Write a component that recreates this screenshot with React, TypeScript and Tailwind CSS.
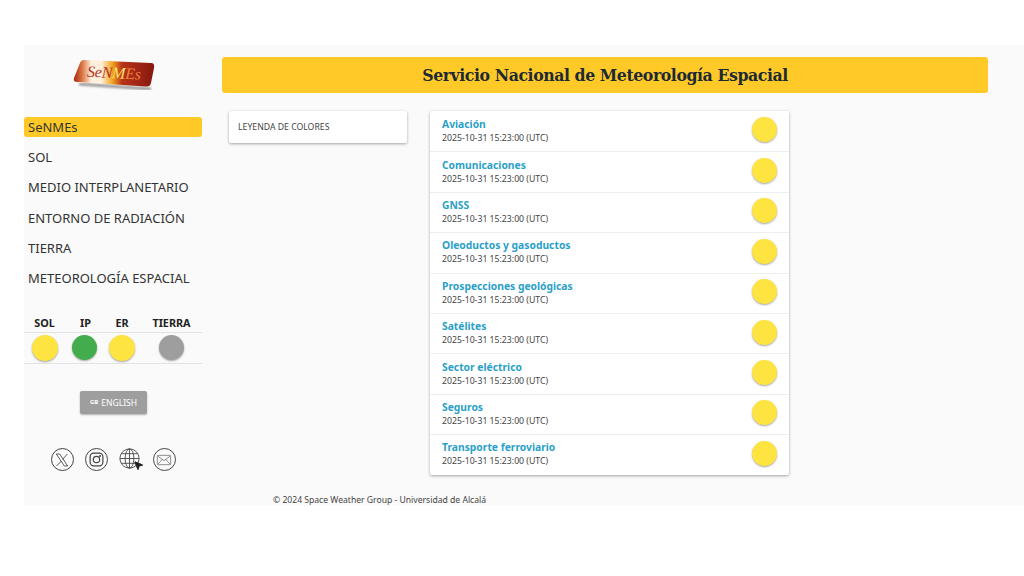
import React from 'react';
import { MousePointer2 } from 'lucide-react';

const navItems = ['SeNMEs', 'SOL', 'MEDIO INTERPLANETARIO', 'ENTORNO DE RADIACIÓN', 'TIERRA', 'METEOROLOGÍA ESPACIAL'];

const sectors = [
  'Aviación',
  'Comunicaciones',
  'GNSS',
  'Oleoductos y gasoductos',
  'Prospecciones geológicas',
  'Satélites',
  'Sector eléctrico',
  'Seguros',
  'Transporte ferroviario',
];

function Logo() {
  return (
    <svg width="84" height="34" viewBox="0 0 84 34" className="block">
      <defs>
        <linearGradient id="logoFill" x1="0" y1="0" x2="1" y2="0">
          <stop offset="0" stopColor="#a62a18" />
          <stop offset="0.1" stopColor="#d9733f" />
          <stop offset="0.22" stopColor="#fff0dc" />
          <stop offset="0.34" stopColor="#fff0dc" />
          <stop offset="0.48" stopColor="#f2a21e" />
          <stop offset="0.6" stopColor="#b8321a" />
          <stop offset="1" stopColor="#87180f" />
        </linearGradient>
        <filter id="logoBlur">
          <feGaussianBlur stdDeviation="1.2" />
        </filter>
      </defs>
      <path d="M6 26 L78 31" stroke="#999" strokeWidth="3" fill="none" filter="url(#logoBlur)" />
      <path d="M11 2 L78 5 Q82 5 81 10 L78 25 Q77 29 73 28.500 L4 24 Q0 24 1 20 L7 5 Q8 2 11 2 Z" fill="url(#logoFill)" />
      <text x="14" y="20" fontFamily="'Liberation Serif', serif" fontStyle="italic" fontSize="16" textLength="54" transform="rotate(3 40 15)">
        <tspan fill="#b3322a">SeN</tspan>
        <tspan fill="#ffe36a">M</tspan>
        <tspan fill="#e8853a">Es</tspan>
      </text>
    </svg>
  );
}

function Dot({ color, size = 'h-[26px] w-[26px]' }: { color: string; size?: string }) {
  return <span className={`block rounded-full ${size} ${color} shadow-[0_1px_2px_rgba(0,0,0,0.35)]`} />;
}

function CircleIcon({ children }: { children: React.ReactNode }) {
  return (
    <span className="flex h-[23px] w-[23px] items-center justify-center rounded-full border border-[#444] text-[#444]">
      {children}
    </span>
  );
}

function Sidebar() {
  return (
    <aside className="w-[178px] shrink-0">
      <div className="flex justify-center pt-[13px] pl-[4px]">
        <Logo />
      </div>
      <nav className="mt-[25px] flex flex-col gap-[10.2px]">
        {navItems.map((item, i) => (
          <div
            key={item}
            className={`h-[20px] rounded-[3px] pl-[4px] text-[13px] leading-[20px] whitespace-nowrap text-[#333] ${i === 0 ? 'bg-[#ffca28]' : ''}`}
          >
            {item}
          </div>
        ))}
      </nav>

      <div className="mt-[27.500px] border-b border-[#e2e2e2] pb-[2px] text-center">
        <div className="grid grid-cols-[41px_38px_38px_61px] border-b border-[#e2e2e2] pb-[2px] text-[10.8px] leading-[15px] font-bold text-[#222]">
          <span>SOL</span>
          <span className="pl-[3px]">IP</span>
          <span>ER</span>
          <span>TIERRA</span>
        </div>
        <div className="grid grid-cols-[41px_38px_38px_61px] justify-items-center pt-[2px]">
          <Dot color="bg-[#fee440]" />
          <Dot color="bg-[#43ac4c]" size="h-[25px] w-[25px]" />
          <Dot color="bg-[#fee440]" />
          <Dot color="bg-[#9e9e9e]" size="h-[25px] w-[25px]" />
        </div>
      </div>

      <div className="mt-[27px] flex justify-center pl-[1px]">
        <button className="flex h-[23px] w-[67px] items-center justify-center gap-[3px] rounded-[2px] bg-[#9e9e9e] text-[8.5px] text-white shadow-[0_1px_2px_rgba(0,0,0,0.3)]">
          <span className="text-[6px] font-bold">GB</span>ENGLISH
        </button>
      </div>

      <div className="mt-[34px] flex items-center justify-center gap-[11px]">
        <CircleIcon>
          <svg viewBox="0 0 24 24" width="16" height="16" fill="none" stroke="currentColor" strokeWidth="1.3">
            <path d="M3.500 3h5l12 18h-5z" />
            <path d="M20 3l-7 8M11 13.500 4 21" />
          </svg>
        </CircleIcon>
        <CircleIcon>
          <svg viewBox="0 0 24 24" width="17" height="17" fill="none" stroke="currentColor" strokeWidth="1.7">
            <rect x="3" y="3" width="18" height="18" rx="5" />
            <circle cx="12" cy="12" r="4.500" />
            <circle cx="17" cy="7" r="0.600" />
          </svg>
        </CircleIcon>
        <span className="relative h-[23px] w-[23px]">
          <svg viewBox="0 0 24 24" width="21" height="21" fill="none" stroke="#444" strokeWidth="1">
            <circle cx="12" cy="12" r="11" />
            <ellipse cx="12" cy="12" rx="5" ry="11" />
            <path d="M12 1v22M1 12h22M2.500 6.500h19M2.500 17.500h19" />
          </svg>
          <MousePointer2 size={11} className="absolute right-[-2px] bottom-[0px] fill-[#222] text-[#222]" />
        </span>
        <CircleIcon>
          <svg viewBox="0 0 24 24" width="16" height="16" fill="none" stroke="currentColor" strokeWidth="0.9">
            <rect x="2" y="5" width="20" height="14" rx="1.500" />
            <path d="M2.500 6l9.500 7 9.500-7M2.500 18.500l7-7.500M21.500 18.500l-7-7.500" />
          </svg>
        </CircleIcon>
      </div>
    </aside>
  );
}

export default function App() {
  return (
    <div className="min-h-screen bg-white pt-[45px] font-['Noto_Sans','Open_Sans',sans-serif]">
      <div className="relative ml-[24px] flex h-[461px] bg-[#fafafa]">
        <Sidebar />
        <main className="ml-[20px] flex-1 pt-[12px]">
          <header className="flex h-[36px] w-[766px] items-center justify-center rounded-[3px] bg-[#ffca28]">
            <h1 className="font-['DejaVu_Serif',serif] text-[17.5px] font-bold tracking-[-0.43px] whitespace-nowrap text-[#1d2a33] [font-stretch:condensed]">
              Servicio Nacional de Meteorología Espacial
            </h1>
          </header>

          <div className="mt-[18px] ml-[7px] flex items-start gap-[23px]">
            <div className="flex h-[32px] w-[178px] items-center rounded-[2px] bg-white pt-[1px] pl-[9px] text-[8.7px] text-[#444] shadow-[0_1px_3px_rgba(0,0,0,0.35)]">
              LEYENDA DE COLORES
            </div>

            <ul className="w-[359px] rounded-[2px] bg-white shadow-[0_1px_3px_rgba(0,0,0,0.35)]">
              {sectors.map((name, i) => (
                <li
                  key={name}
                  className={`flex h-[40.4px] items-center justify-between px-[12px] ${i > 0 ? 'border-t border-[#eeeeee]' : ''}`}
                >
                  <div>
                    <div className="text-[10.3px] leading-[13px] font-bold text-[#2a9fc9]">{name}</div>
                    <div className="text-[8.7px] leading-[14px] text-[#444]">2025-10-31 15:23:00 (UTC)</div>
                  </div>
                  <span className="mb-[3px]">
                    <Dot color="bg-[#fee440]" size="h-[25px] w-[25px]" />
                  </span>
                </li>
              ))}
            </ul>
          </div>
        </main>
        <footer className="absolute bottom-0 left-[249px] text-[8.6px] leading-[12px] text-[#444]">
          © 2024 Space Weather Group - Universidad de Alcalá
        </footer>
      </div>
    </div>
  );
}
